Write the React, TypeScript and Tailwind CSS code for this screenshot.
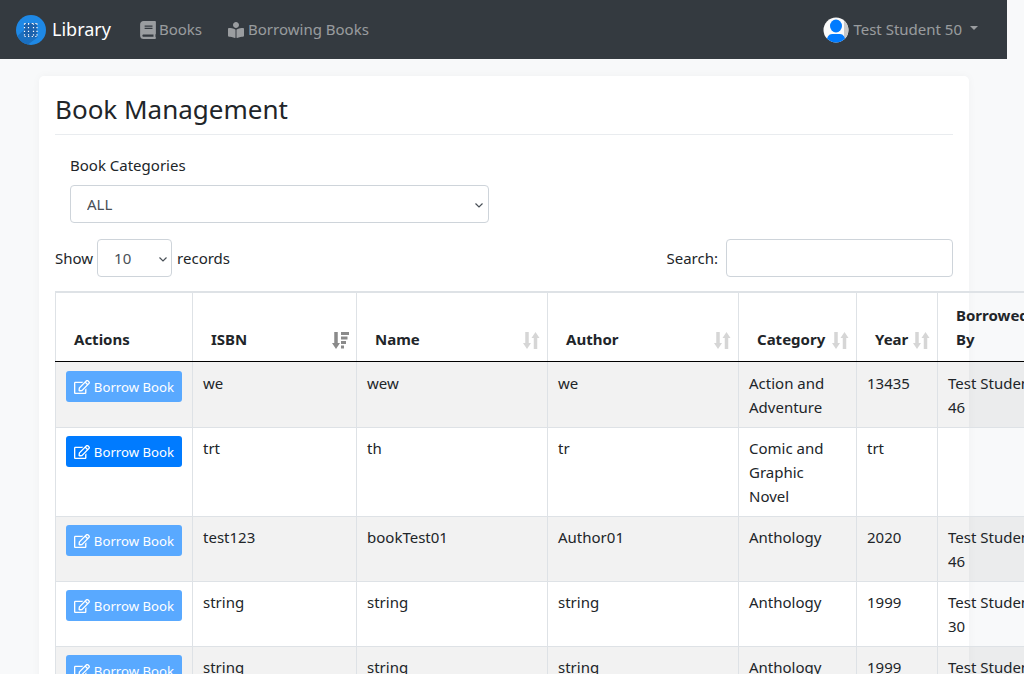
import { FaBook, FaBookReader, FaRegEdit } from "react-icons/fa";

const font = { fontFamily: '"Noto Sans", sans-serif' };

function Logo() {
  return (
    <svg width="30" height="30" viewBox="0 0 30 30" className="shrink-0">
      <circle cx="15" cy="15" r="15" fill="#1e88e5" />
      <path d="M8 8 L22 22 L12 29.6 A15 15 0 0 1 1.4 21 L8 15 Z" fill="#1a6fc0" />
      <rect x="8" y="8" width="13" height="14" fill="#1c62ad" />
      <path d="M8.5 8.5h13M8.5 21.5h13M8.5 8.5v13M12.5 8.5v13M17.5 8.5v13M21 8.5v13" stroke="#ffffff" strokeWidth="1.2" strokeDasharray="1.2 2.4" fill="none" />
    </svg>
  );
}

function Avatar() {
  return (
    <svg width="26" height="26" viewBox="0 0 26 26" className="shrink-0">
      <defs>
        <clipPath id="av"><circle cx="13" cy="13" r="12.5" /></clipPath>
      </defs>
      <circle cx="13" cy="13" r="12.5" fill="#fafafa" />
      <path d="M21 3.5a12.5 12.5 0 0 1 0 19z" fill="#c8c8c8" />
      <g clipPath="url(#av)">
        <ellipse cx="13" cy="9" rx="6" ry="6.5" fill="#007bff" />
        <path d="M3 26 Q4 17 9 17 L17 17 Q22 17 23 26 Z" fill="#007bff" />
      </g>
    </svg>
  );
}

function Sort({ active }: { active?: boolean }) {
  if (active) {
    return (
      <svg width="17" height="17" viewBox="0 0 17 17" className="absolute right-[7px] top-[39px]" fill="#8a8a8a">
        <path d="M2.25 0h3.5v11h2.25l-4 6-4-6h2.25z" />
        <path d="M9 0h8v3H9zM9 4.5h6.5v3H9zM9 9h5v3H9zM9 13.5h3v3H9z" />
      </svg>
    );
  }
  return (
    <svg width="17" height="17" viewBox="0 0 17 17" className="absolute right-[7px] top-[39px]" fill="#d6d6d6">
      <path d="M2.25 0h3.5v11h2.25l-4 6-4-6h2.25z" />
      <path d="M10.75 17h3.5V6h2.25l-4-6-4 6h2.25z" />
    </svg>
  );
}

function Head({ label, sort, active }: { label: React.ReactNode; sort?: boolean; active?: boolean }) {
  return (
    <th className="relative border border-t-2 border-[#dee2e6] border-b-black pl-[18px] pr-[10px] py-[10px] align-bottom text-left font-bold leading-[24px]">
      {label}
      {sort && <Sort active={active} />}
    </th>
  );
}

function Cell({ children, first }: { children?: React.ReactNode; first?: boolean }) {
  return (
    <td className={`border border-[#dee2e6] px-[10px] pb-[8px] align-top leading-[24px] text-[#212529] ${first ? "pt-[9px]" : "pt-[8px]"}`}>
      {children}
    </td>
  );
}

function BorrowBtn({ enabled }: { enabled?: boolean }) {
  return (
    <button className={`flex h-[31px] w-[116px] items-center justify-center gap-[4px] rounded-[3px] text-[13.2px] text-white ${enabled ? "bg-[#007bff]" : "bg-[#59a9ff]"}`}>
      <FaRegEdit className="text-[16px]" />
      <span>Borrow Book</span>
    </button>
  );
}

function Chevron({ className }: { className: string }) {
  return (
    <svg width="8" height="5" viewBox="0 0 8 5" className={`pointer-events-none absolute ${className}`} fill="none" stroke="#495057" strokeWidth="1.2">
      <path d="M0.5 0.5 L4 4 L7.5 0.5" />
    </svg>
  );
}

const rows = [
  { s: true, en: false, isbn: "we", name: "wew", author: "we", cat: "Action and Adventure", year: "13435", by: "Test Student 46" },
  { s: false, en: true, isbn: "trt", name: "th", author: "tr", cat: "Comic and Graphic Novel", year: "trt", by: "" },
  { s: true, en: false, isbn: "test123", name: "bookTest01", author: "Author01", cat: "Anthology", year: "2020", by: "Test Student 46" },
  { s: false, en: false, isbn: "string", name: "string", author: "string", cat: "Anthology", year: "1999", by: "Test Student 30" },
  { s: true, en: false, isbn: "string", name: "string", author: "string", cat: "Anthology", year: "1999", by: "Test Student 30" },
];

export default function App() {
  return (
    <div style={font} className="h-[674px] w-[1024px] overflow-hidden bg-[#f8f9fa] text-[15px] text-[#212529]">
      <nav className="flex h-[59px] w-[1007px] items-center bg-[#343a40] pl-[16px] pr-[29px]">
        <Logo />
        <span className="ml-[6px] text-[18px] text-white">Library</span>
        <span className="ml-[28px] flex items-center gap-[1px] text-[rgba(255,255,255,0.5)]">
          <FaBook className="mr-[1px] text-[18px]" />Books
        </span>
        <span className="ml-[26px] flex items-center gap-[4px] text-[rgba(255,255,255,0.5)]">
          <FaBookReader className="text-[16px]" />Borrowing Books
        </span>
        <span className="ml-auto flex items-center gap-[4px] text-[rgba(255,255,255,0.5)]">
          <Avatar />Test Student 50
          <span className="ml-[4px] mb-[3px] h-0 w-0 border-x-[4px] border-t-[4px] border-x-transparent border-t-[rgba(255,255,255,0.5)]" />
        </span>
      </nav>
      <main className="ml-[39px] mt-[17px] w-[930px] rounded-[5px] bg-white px-[16px] pt-[12px] pb-[40px] shadow-[0_0_8px_rgba(0,0,0,0.04)]">
        <h1 className="border-b border-[#e9ecef] pb-[4px] text-[26px] leading-[42px]">Book Management</h1>
        <div className="mx-[15px] mt-[18px]">
          <label className="block leading-[24px]">Book Categories</label>
          <div className="relative mt-[8px] w-[419px]">
            <select className="block h-[38px] w-full appearance-none rounded-[4px] border border-[#ced4da] bg-white pl-[16px] pr-[4px] text-[#495057]">
              <option>ALL</option>
            </select>
            <Chevron className="right-[6px] top-[18px]" />
          </div>
        </div>
        <div className="mt-[16px] flex items-center justify-between">
          <div className="flex items-center gap-[4px]">
            Show
            <div className="relative w-[75px]">
              <select className="block h-[38px] w-full appearance-none rounded-[4px] border border-[#ced4da] bg-white pl-[16px] pr-[4px] text-[#495057]">
                <option>10</option>
              </select>
              <Chevron className="right-[5px] top-[18px]" />
            </div>
            <span className="ml-[1px]">records</span>
          </div>
          <div className="flex items-center gap-[8px]">
            Search:
            <div className="h-[38px] w-[227px] rounded-[4px] border border-[#ced4da] bg-white" />
          </div>
        </div>
        <table className="mt-[14px] w-[997px] table-fixed border-collapse">
          <colgroup>
            <col className="w-[137px]" />
            <col className="w-[164px]" />
            <col className="w-[191px]" />
            <col className="w-[191px]" />
            <col className="w-[118px]" />
            <col className="w-[81px]" />
            <col className="w-[115px]" />
          </colgroup>
          <thead>
            <tr>
              <Head label="Actions" />
              <Head label="ISBN" sort active />
              <Head label="Name" sort />
              <Head label="Author" sort />
              <Head label="Category" sort />
              <Head label="Year" sort />
              <Head label="Borrowed By" />
            </tr>
          </thead>
          <tbody>
            {rows.map((r, i) => (
              <tr key={i} className={r.s ? "bg-black/5" : ""}>
                <Cell first={i === 0}><BorrowBtn enabled={r.en} /></Cell>
                <Cell first={i === 0}>{r.isbn}</Cell>
                <Cell first={i === 0}>{r.name}</Cell>
                <Cell first={i === 0}>{r.author}</Cell>
                <Cell first={i === 0}>{r.cat}</Cell>
                <Cell first={i === 0}>{r.year}</Cell>
                <Cell first={i === 0}>{r.by}</Cell>
              </tr>
            ))}
          </tbody>
        </table>
      </main>
    </div>
  );
}
